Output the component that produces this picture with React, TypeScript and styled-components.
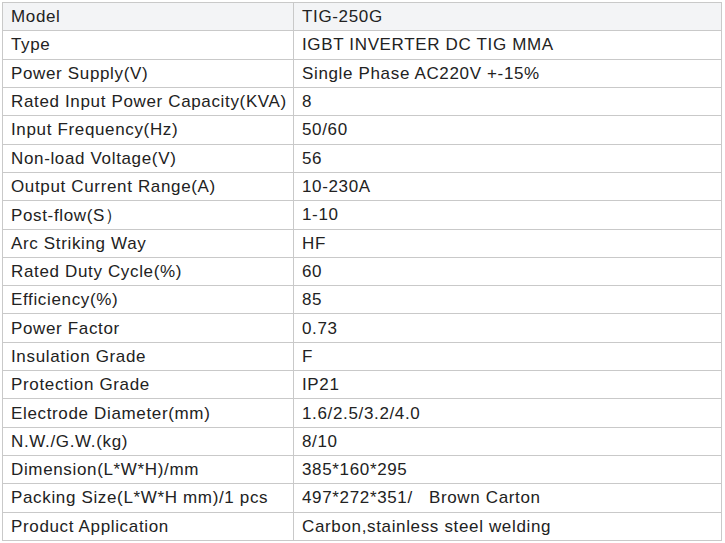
import React from "react";
import styled, { createGlobalStyle } from "styled-components";

const GlobalStyle = createGlobalStyle`
  body {
    margin: 2px;
    background: #ffffff;
    font-family: "Liberation Sans", Arial, sans-serif;
  }
`;

const Table = styled.div`
  width: 720px;
  display: grid;
  grid-template-columns: 291px 428px;
  grid-auto-rows: 28.32px;
  border-top: 1px solid #c9c9c9;
  border-left: 1px solid #c9c9c9;
  box-sizing: border-box;
`;

const Cell = styled.div<{ $head?: boolean }>`
  display: flex;
  align-items: center;
  padding-left: 8px;
  padding-top: 1px;
  border-right: 1px solid #c9c9c9;
  border-bottom: 1px solid #c9c9c9;
  background: ${(p) => (p.$head ? "#f3f4f6" : "#ffffff")};
  font-size: 17px;
  letter-spacing: 0.65px;
  color: #222222;
  white-space: pre;
  box-sizing: border-box;
`;

const rows: [string, string][] = [
  ["Model", "TIG-250G"],
  ["Type", "IGBT INVERTER DC TIG MMA"],
  ["Power Supply(V)", "Single Phase AC220V +-15%"],
  ["Rated Input Power Capacity(KVA)", "8"],
  ["Input Frequency(Hz)", "50/60"],
  ["Non-load Voltage(V)", "56"],
  ["Output Current Range(A)", "10-230A"],
  ["Post-flow(S\uFF09", "1-10"],
  ["Arc Striking Way", "HF"],
  ["Rated Duty Cycle(%)", "60"],
  ["Efficiency(%)", "85"],
  ["Power Factor", "0.73"],
  ["Insulation Grade", "F"],
  ["Protection Grade", "IP21"],
  ["Electrode Diameter(mm)", "1.6/2.5/3.2/4.0"],
  ["N.W./G.W.(kg)", "8/10"],
  ["Dimension(L*W*H)/mm", "385*160*295"],
  ["Packing Size(L*W*H mm)/1 pcs", "497*272*351/   Brown Carton"],
  ["Product Application", "Carbon,stainless steel welding"],
];

export default function App() {
  return (
    <>
      <GlobalStyle />
      <Table>
        {rows.map(([label, value], i) => (
          <React.Fragment key={label}>
            <Cell $head={i === 0}>{label}</Cell>
            <Cell $head={i === 0}>{value}</Cell>
          </React.Fragment>
        ))}
      </Table>
    </>
  );
}
